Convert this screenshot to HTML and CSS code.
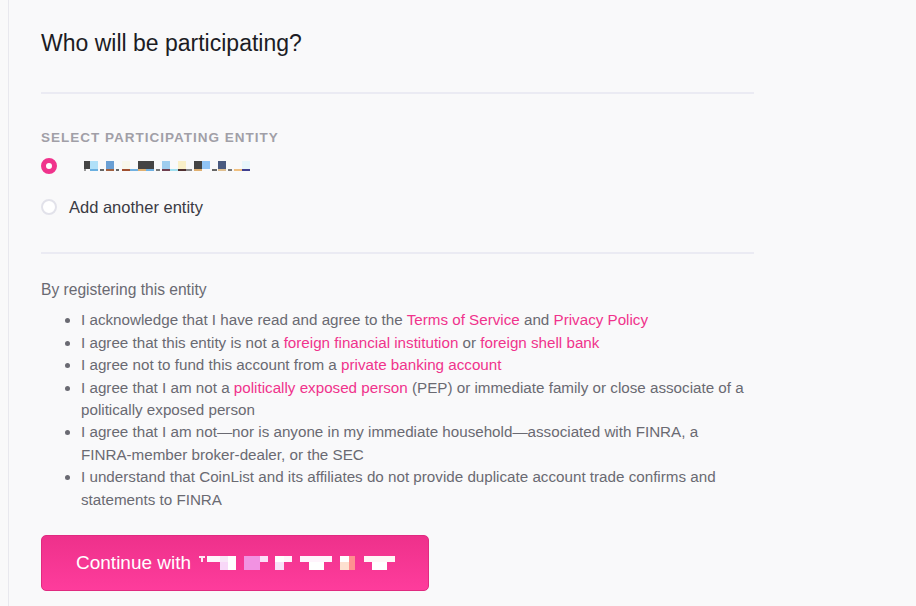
FILE: index.html
```html
<!DOCTYPE html>
<html>
<head>
<meta name='viewport' content='width=device-width, initial-scale=1'>
<title>Who will be participating?</title>
<link rel="stylesheet" href="styles.css">
</head>
<body>
	<div class='page'>
		<div class='panel'>
			<h1 class='title'>Who will be participating?</h1>
			<hr class='rule'>

			<div class='section-label'>Select participating entity</div>
			<div class='choices'>
				<label class='choice'>
					<span class='radio checked'></span>
					<svg class='mosaic' width='170' height='12' viewBox='82 162 170 12'>
						<rect x='84' y='163' width='6' height='8' fill='#444'/>
						<rect x='90' y='163' width='8' height='8' fill='#b0e0f8'/>
						<rect x='106' y='163' width='8' height='8' fill='#6a9fd4'/>
						<rect x='122' y='163' width='8' height='8' fill='#f8f8ec'/>
						<rect x='138' y='163' width='16' height='8' fill='#444'/>
						<rect x='162' y='163' width='8' height='8' fill='#9fcdee'/>
						<rect x='178' y='163' width='8' height='8' fill='#faf0c8'/>
						<rect x='194' y='163' width='8' height='8' fill='#444'/>
						<rect x='202' y='163' width='8' height='8' fill='#90c4f5'/>
						<rect x='218' y='163' width='8' height='8' fill='#4a5a80'/>
						<rect x='242' y='163' width='8' height='8' fill='#e8f6fb'/>
						<rect x='84' y='171' width='2' height='2' fill='#999'/>
						<rect x='90' y='171' width='8' height='2' fill='#6ab0e0'/>
						<rect x='100' y='171' width='4' height='2' fill='#666'/>
						<rect x='106' y='171' width='8' height='2' fill='#a06040'/>
						<rect x='116' y='171' width='3' height='2' fill='#666'/>
						<rect x='122' y='171' width='8' height='2' fill='#a05030'/>
						<rect x='130' y='171' width='8' height='2' fill='#70b0e0'/>
						<rect x='138' y='171' width='8' height='2' fill='#e0b070'/>
						<rect x='146' y='171' width='8' height='2' fill='#70b0e0'/>
						<rect x='156' y='171' width='4' height='2' fill='#777'/>
						<rect x='162' y='171' width='8' height='2' fill='#704050'/>
						<rect x='170' y='171' width='8' height='2' fill='#a0e0f0'/>
						<rect x='178' y='171' width='8' height='2' fill='#503030'/>
						<rect x='186' y='171' width='6' height='2' fill='#888'/>
						<rect x='194' y='171' width='8' height='2' fill='#e0b070'/>
						<rect x='212' y='171' width='5' height='2' fill='#666'/>
						<rect x='218' y='171' width='8' height='2' fill='#e0c090'/>
						<rect x='228' y='171' width='4' height='2' fill='#777'/>
						<rect x='234' y='171' width='8' height='2' fill='#f0c080'/>
						<rect x='242' y='171' width='8' height='2' fill='#404090'/>
					</svg>
				</label>
				<label class='choice'>
					<span class='radio'></span>
					<span class='choice-text'>Add another entity</span>
				</label>
			</div>

			<hr class='rule'>

			<div class='terms'>
				<p class='terms-intro'>By registering this entity</p>
				<ul class='terms-list'>
					<li>I acknowledge that I have read and agree to the <a href='#'>Terms of Service</a> and <a href='#'>Privacy Policy</a></li>
					<li>I agree that this entity is not a <a href='#'>foreign financial institution</a> or <a href='#'>foreign shell bank</a></li>
					<li>I agree not to fund this account from a <a href='#'>private banking account</a></li>
					<li>I agree that I am not a <a href='#'>politically exposed person</a> (PEP) or immediate family or close associate of a <span>politically exposed person</span></li>
					<li>I agree that I am not—nor is anyone in my immediate household—associated with FINRA, a <span class='nowrap'>FINRA-member</span> broker-dealer, or the SEC</li>
					<li>I understand that CoinList and its affiliates do not provide duplicate account trade confirms and statements to FINRA</li>
				</ul>
			</div>

			<button class='continue' type='button'>
				<span>Continue with</span>
				<svg class='mosaic' width='200' height='16' viewBox='195 555 200 16'>
					<rect x='197' y='556' width='6' height='2' fill='#fde8f4'/>
					<rect x='199' y='556' width='2' height='6' fill='#fde8f4'/>
					<rect x='205' y='556' width='13' height='6' fill='#fff6fc'/>
					<rect x='218' y='556' width='8' height='6' fill='#f8e8f8'/>
					<rect x='218' y='562' width='8' height='8' fill='#f8d8f8'/>
					<rect x='226' y='556' width='8' height='6' fill='#fff'/>
					<rect x='226' y='562' width='8' height='8' fill='#fff'/>
					<rect x='242' y='556' width='16' height='14' fill='#f292e2'/>
					<rect x='258' y='556' width='8' height='6' fill='#fce0f8'/>
					<rect x='273' y='556' width='9' height='6' fill='#fff'/>
					<rect x='273' y='562' width='9' height='8' fill='#f8e0f8'/>
					<rect x='282' y='556' width='8' height='6' fill='#fff4fc'/>
					<rect x='298' y='556' width='32' height='6' fill='#fff4fc'/>
					<rect x='307' y='562' width='15' height='8' fill='#fff'/>
					<rect x='338' y='556' width='9' height='6' fill='#fff'/>
					<rect x='338' y='562' width='9' height='8' fill='#fde0d0'/>
					<rect x='347' y='556' width='6' height='14' fill='#ff9090'/>
					<rect x='362' y='556' width='31' height='6' fill='#fff6f6'/>
					<rect x='370' y='562' width='15' height='8' fill='#fff'/>
				</svg>
			</button>
		</div>
	</div>
</body>
</html>
```

FILE: styles.css
```css
* {
	box-sizing: border-box;
}

body {
	margin: 0;
	background-color: #f9f9fa;
	font-family: 'Liberation Sans', 'Helvetica', sans-serif;
	color: #3b3b44;
}

.page {
	min-height: 606px;
	margin-left: 8px;
	border-left: 1px solid #e8e8ee;
	padding: 28px 0 0 32px;
}

.panel {
	width: 713px;
}

.title {
	margin: 0;
	font-size: 23px;
	font-weight: normal;
	line-height: 30px;
	color: #1c1c24;
}

.rule {
	margin: 0;
	border: 0;
	border-top: 2px solid #ebebf3;
}

.title + .rule {
	margin-top: 34px;
}

.section-label {
	margin-top: 36px;
	font-size: 13.5px;
	font-weight: bold;
	letter-spacing: 1px;
	text-transform: uppercase;
	color: #a19fa7;
	line-height: 16px;
}

.choices {
	display: flex;
	flex-direction: column;
	gap: 17px;
	padding: 8px 0 33px 0;
}

.choice {
	display: flex;
	align-items: center;
	gap: 12px;
	height: 24px;
}

.choice .mosaic {
	margin-left: 13px;
}

.radio {
	width: 16px;
	height: 16px;
	border-radius: 50%;
	border: 2px solid #e2e2ea;
	background-color: #fff;
	flex-shrink: 0;
}

.radio.checked {
	border: 5px solid #f0338c;
}

.choice-text {
	font-size: 16.5px;
}

.terms {
	padding-top: 25px;
	color: #6a6a72;
	font-size: 15.2px;
	line-height: 22.4px;
}

.terms-intro {
	margin: 0;
	font-size: 15.6px;
}

.terms-list {
	margin: 8px 0 0 0;
	padding-left: 40px;
}

.terms-list a {
	color: #f0338c;
	text-decoration: none;
}

.nowrap {
	white-space: nowrap;
}

.continue {
	display: flex;
	align-items: center;
	gap: 6px;
	margin-top: 24px;
	width: 388px;
	height: 56px;
	padding: 0 0 0 34px;
	border: 1px solid #e02a80;
	border-radius: 5px;
	background: linear-gradient(#ee318b, #fe3c9c);
	color: #fff;
	font-family: inherit;
	font-size: 19px;
}
```
